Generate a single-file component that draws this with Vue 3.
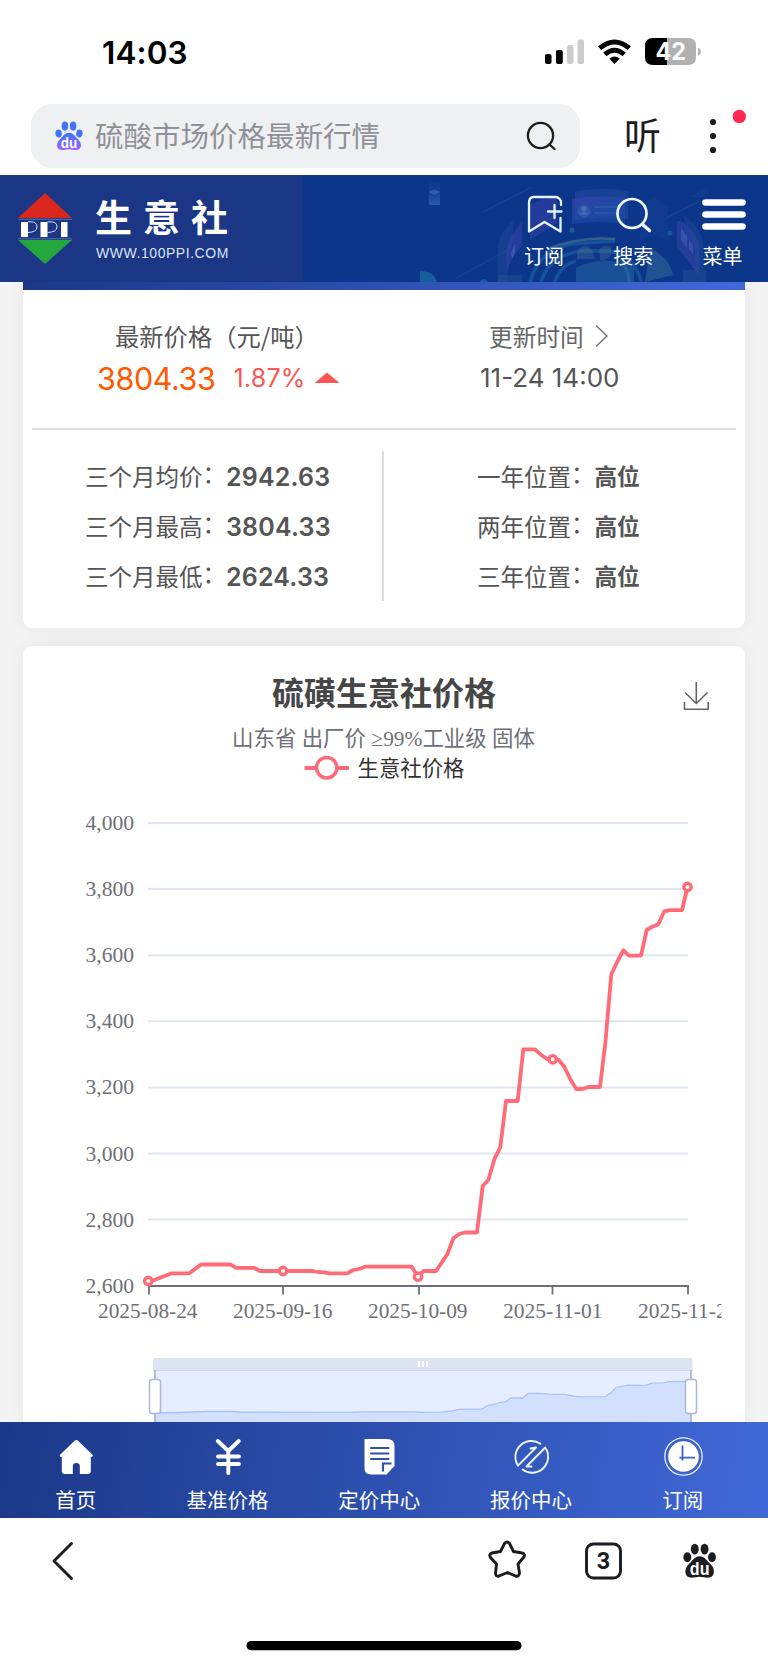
<script setup>
const averages = [
  { label: '三个月均价', value: '2942.63' },
  { label: '三个月最高', value: '3804.33' },
  { label: '三个月最低', value: '2624.33' },
]
const positions = [
  { label: '一年位置', value: '高位' },
  { label: '两年位置', value: '高位' },
  { label: '三年位置', value: '高位' },
]
const gridLines = [
  { label: '4,000', y: 823 },
  { label: '3,800', y: 889 },
  { label: '3,600', y: 955.2 },
  { label: '3,400', y: 1021.3 },
  { label: '3,200', y: 1087.4 },
  { label: '3,000', y: 1153.5 },
  { label: '2,800', y: 1219.6 },
  { label: '2,600', y: 1285.7 },
]
const dates = [
  { label: '2025-08-24', x: 98, tick: 149 },
  { label: '2025-09-16', x: 233, tick: 283 },
  { label: '2025-10-09', x: 368, tick: 419 },
  { label: '2025-11-01', x: 503, tick: 552.5 },
  { label: '2025-11-24', x: 638, tick: 688 },
]
const markers = [
  [148.3, 1281],
  [283, 1271],
  [418, 1276.7],
  [552.7, 1059.3],
  [687.5, 887],
]
const priceLine =
  '148.3,1281 153.5,1280.3 171.7,1273.3 189.3,1273.3 201,1264.5 230.7,1264.5 236,1267.8 254,1267.8 260,1271 312.7,1271 318,1272 324,1272.3 329.3,1273.3 347.3,1273.3 353.3,1270 359,1269 365,1266.7 411.7,1266.7 418,1276.7 423.5,1271 436,1271 447.3,1254.3 453.3,1238.3 459.3,1234 465,1232.5 477,1232.5 482.7,1186 488.3,1180 494.7,1158.3 500.3,1147.3 506,1101 517.7,1101 523.3,1049.3 535,1049.3 541.7,1055.3 547,1059 552.7,1059.3 558.3,1059.6 564.3,1066.7 570.3,1079.3 576.3,1089 582.7,1089 588.3,1087 600,1087 605.3,1043.3 611.3,974.3 617.3,961.7 623.3,950.3 629,955.7 641,955.7 646.7,930 652.3,926.7 658.3,924.3 664.3,911.3 670,910.2 682,910.2 687.5,887'
const sliderLine =
  '155,1413 180,1412.5 205,1411.5 232,1411.5 240,1412 350,1412.3 365,1411.8 415,1411.8 422,1412.4 441,1412.2 452,1411 459,1409.3 482,1409 487,1405.5 494,1404.5 500,1402.7 505,1402 511,1398 523,1398 528,1393.5 540,1393.4 548,1394.1 565,1394.3 575,1396.3 582,1396.9 605,1396.6 611,1392.6 616,1387.5 628,1385.2 646,1385.3 652,1383.2 663,1382.8 669,1381.6 691,1381.5'
</script>

<template>
  <main class="screen">
    <header class="status">
      <div class="clock">14:03</div>
      <svg class="status-icons" width="160" height="34" viewBox="543 35 160 34">
        <rect x="545" y="54" width="6.5" height="10" rx="2" />
        <rect x="556" y="50" width="6.8" height="14" rx="2" />
        <rect x="567" y="45" width="6.5" height="19" rx="2" fill="#ccc" />
        <rect x="577.5" y="39.5" width="6.5" height="24.5" rx="2" fill="#ccc" />
        <path d="M599.6 48.2Q614.5 35.6 629.4 48.2" fill="none" stroke="#000" stroke-width="4.8" />
        <path d="M604.8 54.4Q614.5 46.2 624.2 54.4" fill="none" stroke="#000" stroke-width="4.8" />
        <path d="M609.4 58.8Q614.5 54.3 619.6 58.8L614.5 64Z" />
        <path d="M653 38H667V65H653Q645 65 645 57V46Q645 38 653 38Z" />
        <path d="M667 38H688Q696 38 696 46V57Q696 65 688 65H667Z" fill="#b1b1b1" />
        <path d="M698 47.5Q701 49 701 51.7Q701 54.5 698 56Z" fill="#b1b1b1" />
        <text x="655.5" y="60.4" class="battery-text" textLength="30.5" lengthAdjust="spacingAndGlyphs">42</text>
      </svg>
    </header>

    <section class="browser-bar">
      <div class="search">
        <svg class="paw" width="28" height="30" viewBox="0 0 34 36">
          <defs>
            <linearGradient id="pawFill" x1="0" y1="0" x2="0" y2="1">
              <stop offset="0" stop-color="#3d74ff" />
              <stop offset="1" stop-color="#9b63fb" />
            </linearGradient>
          </defs>
          <g fill="#4372fc">
            <ellipse cx="4.4" cy="15" rx="3.9" ry="4.9" transform="rotate(-10 4.4 15)" />
            <ellipse cx="12" cy="6" rx="4" ry="5.5" />
            <ellipse cx="22" cy="6" rx="4" ry="5.5" />
            <ellipse cx="29.6" cy="15" rx="3.9" ry="4.9" transform="rotate(10 29.6 15)" />
          </g>
          <path d="M17 14C22 14 24 18 28 22C34 28 32 35 25.500 35C22 35 20 34 17 34C14 34 12 35 8.500 35C2 35 0 28 6 22C10 18 12 14 17 14Z" fill="url(#pawFill)" />
          <text x="7" y="32.500" class="du" fill="#fff" textLength="20" lengthAdjust="spacingAndGlyphs">du</text>
        </svg>
        <span class="query">硫酸市场价格最新行情</span>
        <svg class="magnifier" width="32" height="32" viewBox="0 0 32 32" fill="none" stroke="#1b1b22" stroke-width="2.300" stroke-linecap="round">
          <circle cx="14.500" cy="15.500" r="12.600" /><path d="M23.500 24.500L28.500 29" />
        </svg>
      </div>
      <span class="listen">听</span>
      <svg class="more" width="40" height="64" viewBox="706 104 40 64" fill="#1b1b22">
        <circle cx="713" cy="122" r="3.100" /><circle cx="713" cy="136" r="3.100" /><circle cx="713" cy="150" r="3.100" />
        <circle cx="739.300" cy="116.500" r="6.700" fill="#ff2850" />
      </svg>
    </section>

    <section class="site-head">
      <svg class="scenery" width="768" height="107" viewBox="0 175 768 107">
        <defs>
          <linearGradient id="beam" x1="0" y1="0" x2="0" y2="1"><stop offset="0" stop-color="#15469b" stop-opacity=".2" /><stop offset="1" stop-color="#3766b8" stop-opacity=".75" /></linearGradient>
          <linearGradient id="panel" x1="0" y1="0" x2="1" y2="1"><stop offset="0" stop-color="#3b43b2" stop-opacity=".7" /><stop offset="1" stop-color="#1553b1" stop-opacity=".4" /></linearGradient>
        </defs>
        <rect width="302.500" height="107" y="175" fill="#1a3685" />
        <rect x="429" y="182" width="11" height="23" fill="url(#beam)" />
        <path d="M429 192L434.500 189.500L440 192L434.500 195Z" fill="#426fc0" opacity=".6" />
        <g fill="none" stroke="#23509d" stroke-opacity=".6"><path d="M483 212L532 187M455 279L520 243M662 220L700 201" /></g>
        <path d="M575 191Q602 187 628 191V219Q602 216 575 219Z" fill="#28529f" opacity=".45" />
        <path d="M572 199Q599 194 625 198V224Q599 220 572 224Z" fill="url(#panel)" />
        <circle cx="584" cy="211" r="6.500" fill="#315bae" opacity=".8" /><circle cx="584" cy="208.500" r="2.500" fill="#4870b8" /><path d="M579.500 214.500Q584 209 588.500 214.500Z" fill="#4870b8" />
        <path d="M594 207H620M594 213H620" stroke="#335bab" stroke-width="2" opacity=".6" />
        <path d="M498 282V245Q501 230 513 221V240Q508 252 507 282Z" fill="#25509b" opacity=".4" />
        <path d="M506 253Q509 235 522 222V246Q511 257 507 272Z" fill="#3a43ad" opacity=".55" />
        <path d="M511 253L515 244V252L512 259Z" fill="#5871c6" opacity=".45" />
        <path d="M530 205Q546 196 557 198V223L530 240Z" fill="#3b42ae" opacity=".5" />
        <path d="M677 221Q684 218 699 242V275L677 247Z" fill="#3643aa" opacity=".55" />
        <path d="M683 215Q700 226 703 244V270H695V250Z" fill="#25509b" opacity=".4" />
        <path d="M681 228L687 236V248L681 240ZM689 240L693 245V254L689 249Z" fill="#587bc1" opacity=".35" />
        <g fill="none" stroke="#267aad" stroke-width="3.500" opacity=".42">
          <path d="M530 282Q538 251 571 244L615 241M541 282Q549 255 582 251H610Q636 258 641 282M555 282Q560 265 576 261M620 260Q628 267 629 282" />
        </g>
        <path d="M547 249Q580 236 615 239" fill="none" stroke="#668d93" stroke-width="2.500" opacity=".45" />
        <path d="M650 248Q670 258 673 275L645 282Z" fill="#437fa0" opacity=".4" />
        <path d="M577 252Q579 246 586 246L592 249L595 259H577ZM599 250Q604 244 611 247V255Q609 260 600 260Z" fill="#698398" opacity=".28" />
        <path d="M576 268Q603 253 634 268V282H576Z" fill="#337dae" opacity=".35" />
        <circle cx="572" cy="230" r="2.500" fill="#287aa5" opacity=".6" /><circle cx="670" cy="233" r="2.500" fill="#287aa5" opacity=".5" />
        <path d="M420 282V271Q434 271 437 282ZM480 282Q483 276 488 282Z" fill="#217eae" opacity=".55" />
        <path d="M498 282V275H522V282ZM683 282V270H706V282Z" fill="#244d91" opacity=".5" />
        <path d="M640 208L654 197L668 207V241L654 235L640 241ZM688 197L704 189L713 197Z" fill="#174293" opacity=".35" />
      </svg>
      <div class="brand">
        <svg width="56" height="76" viewBox="17 191 56 76">
          <path d="M45 193L72 218H18Z" fill="#da281e" />
          <path d="M18 240H72L45 264Z" fill="#22a83d" />
          <path d="M18 219.300H72M18 238.800H72" stroke="#7081b0" stroke-width=".8" />
          <path d="M21 222H28V237H21ZM40.500 222H47.500V237H40.500ZM61 222H67.500V237H61Z" fill="#fff" />
          <path d="M28 221.800H31Q37 222 37 227Q37 232 28 232.500M47.500 221.800H51Q57 222 57 227Q57 232 47.500 232.500" fill="none" stroke="#dce1f0" stroke-width="1" />
        </svg>
        <div class="brand-copy">
          <strong>生意社</strong>
          <span>WWW.100PPI.COM</span>
        </div>
      </div>
      <div class="site-actions">
        <div class="action">
          <svg width="44" height="42" viewBox="0 0 44 42" fill="none" stroke="#e8f1ff" stroke-width="2.300" stroke-linejoin="round" stroke-linecap="round">
            <path d="M38 12V8Q35.500 4 33 4H11Q6 4 6 10V38.500L21.500 29L37.500 38.500V25" /><path d="M25 18.500H38.500M31.500 12V25" />
          </svg>
          <span>订阅</span>
        </div>
        <div class="action">
          <svg width="44" height="42" viewBox="0 0 44 42" fill="none" stroke="#f1f7ff" stroke-width="2.700" stroke-linecap="round">
            <circle cx="20" cy="20.500" r="14.500" /><path d="M30.500 31.500L37.500 37.500" stroke-width="3.500" />
          </svg>
          <span>搜索</span>
        </div>
        <div class="action">
          <svg width="48" height="42" viewBox="0 0 48 42" stroke="#fff" stroke-width="6.600" stroke-linecap="round">
            <path d="M6.500 9.500H43.500M6.500 21.500H43.500M6.500 33.500H43.500" />
          </svg>
          <span>菜单</span>
        </div>
      </div>
    </section>

    <section class="content">
      <article class="card summary">
        <div class="strip"></div>
        <div class="latest">
          <div class="latest-cell">
            <span class="caption">最新价格（元/吨）</span>
            <div class="price-row">
              <span class="price">3804.33</span>
              <span class="change">1.87%</span>
              <svg width="26" height="12" viewBox="0 0 26 12"><path d="M13 .5L25.500 11H.5Z" fill="#fb5555" /></svg>
            </div>
          </div>
          <div class="latest-cell update">
            <span class="caption muted">更新时间<svg width="14" height="24" viewBox="0 0 14 24" fill="none" stroke="#777" stroke-width="1.500"><path d="M1 1.500L12 12L1 22.500" /></svg></span>
            <span class="stamp">11-24 14:00</span>
          </div>
        </div>
        <div class="figures">
          <div class="column left">
            <div v-for="row in averages" :key="row.label" class="figure">
              <span>{{ row.label }}</span><span class="colon">：</span><strong class="number">{{ row.value }}</strong>
            </div>
          </div>
          <div class="column right">
            <div v-for="row in positions" :key="row.label" class="figure">
              <span>{{ row.label }}</span><span class="colon">：</span><strong>{{ row.value }}</strong>
            </div>
          </div>
        </div>
      </article>

      <article class="card chart-card">
        <svg class="chart" width="722" height="776" viewBox="23 646 722 776">
          <defs><clipPath id="canvasEdge"><rect x="24" y="646" width="697.500" height="776" /></clipPath></defs>
          <text x="272" y="705" class="chart-title">硫磺生意社价格</text>
          <text x="232" y="746" class="chart-subtitle" textLength="303" lengthAdjust="spacingAndGlyphs">山东省 出厂价 ≥99%工业级 固体</text>
          <g fill="none" stroke="#666" stroke-width="1.600">
            <path d="M696.300 682V703M685 692.500L696.300 703.500L707.500 692.500" /><path d="M684.500 702V709.300H708.200V702" />
          </g>
          <path d="M304.500 768H349" stroke="#ff6b76" stroke-width="4" />
          <circle cx="326.700" cy="767.800" r="10.200" fill="#fff" stroke="#ff6b76" stroke-width="3.500" />
          <text x="357.500" y="775.800" class="legend" textLength="107" lengthAdjust="spacingAndGlyphs">生意社价格</text>

          <g v-for="(line, i) in gridLines" :key="line.label">
            <path v-if="i < 7" :d="`M148 ${line.y}H688`" stroke="#e0e6f1" stroke-width="2" />
            <text x="85.500" :y="line.y + 7" class="axis-text" textLength="48.500" lengthAdjust="spacingAndGlyphs">{{ line.label }}</text>
          </g>
          <path d="M148 1286H689" stroke="#6e7079" stroke-width="1.800" />
          <g clip-path="url(#canvasEdge)">
            <g v-for="date in dates" :key="date.label">
              <path :d="`M${date.tick} 1286V1294.500`" stroke="#6e7079" stroke-width="1.800" />
              <text :x="date.x" y="1318.300" class="axis-text" textLength="99.500" lengthAdjust="spacingAndGlyphs">{{ date.label }}</text>
            </g>
          </g>
          <polyline :points="priceLine" fill="none" stroke="#ff6b76" stroke-width="3.800" stroke-linejoin="round" />
          <circle v-for="point in markers" :key="point[0]" :cx="point[0]" :cy="point[1]" r="3.700" fill="#fff" stroke="#ff6b76" stroke-width="3.400" />

          <path d="M153 1372V1360.500Q153 1358 155.500 1358H690Q692.500 1358 692.500 1360.500V1372Z" fill="#dce4f1" />
          <rect x="154" y="1371" width="538" height="51" fill="#e6edfe" />
          <polygon :points="`155,1422 ${sliderLine} 691,1422`" fill="#d3e0fd" />
          <polyline :points="sliderLine" fill="none" stroke="#a9c3fa" stroke-width="1.300" />
          <path d="M154 1370.500H692" stroke="#d0dae9" stroke-width="1" />
          <path d="M419 1361V1367M423 1361V1367M427 1361V1367" stroke="#fff" stroke-width="2" />
          <path d="M155 1370V1422M691 1370V1422" stroke="#acb8d4" stroke-width="1.800" />
          <rect x="149.500" y="1379.500" width="11" height="34" rx="2.500" fill="#fff" stroke="#acb8d4" stroke-width="1.500" />
          <rect x="685.500" y="1379.500" width="11" height="34" rx="2.500" fill="#fff" stroke="#acb8d4" stroke-width="1.500" />
        </svg>
      </article>
    </section>

    <nav class="tabs">
      <div class="tab">
        <svg width="44" height="40" viewBox="0 0 44 40" fill="#fff"><path d="M20.300 4Q22.300 2 24.300 4L38.800 18Q39.300 20 36.800 20V34Q36.800 37 33.800 37H25.800V29Q25.800 26 22.300 26Q18.800 26 18.800 29V37H10.800Q7.800 37 7.800 34V20Q5.300 20 5.800 18Z" /></svg>
        <span>首页</span>
      </div>
      <div class="tab">
        <svg width="44" height="40" viewBox="0 0 44 40" fill="none" stroke="#fff" stroke-width="3.900" stroke-linecap="round"><path d="M11.800 4L22.300 14L32.800 4M22.300 14V36M12 19.500H33M12 27H33" /></svg>
        <span>基准价格</span>
      </div>
      <div class="tab">
        <svg width="44" height="40" viewBox="0 0 44 40"><path d="M7.500 2H30Q37.500 2 37.500 9V29L29.500 37.500H14Q7.500 37.500 7.500 31Z" fill="#fff" /><path d="M14 11H31.500M14 16.500H31.500M14 22H31.500" stroke="#2d51ad" stroke-width="2" stroke-linecap="round" /><path d="M26 34.500V26.500H34.500" fill="none" stroke="#2d51ad" stroke-width="2.200" /></svg>
        <span>定价中心</span>
      </div>
      <div class="tab">
        <svg width="44" height="40" viewBox="0 0 44 40" fill="none" stroke="#edf3ff" stroke-width="1.900" stroke-linejoin="round" stroke-linecap="round"><path d="M31.500 6.800A16 16 0 0 0 9 28.700L27 10.500L21.500 11.500M13.500 32.500A16 16 0 0 0 36.200 10.500L17.500 29.500H22.500" /></svg>
        <span>报价中心</span>
      </div>
      <div class="tab">
        <svg width="44" height="40" viewBox="0 0 44 40"><circle cx="22.500" cy="19.500" r="18.700" fill="none" stroke="#e6edff" stroke-width="1.300" /><circle cx="22.500" cy="19.500" r="15.300" fill="#fff" /><path d="M21.500 8.500V23.500M18.500 20.600H34" fill="none" stroke="#3c63cb" stroke-width="1.800" /></svg>
        <span>订阅</span>
      </div>
    </nav>

    <footer class="toolbar">
      <svg width="768" height="147" viewBox="0 1518 768 147">
        <g fill="none" stroke="#1b1b22" stroke-width="2.900" stroke-linejoin="round" stroke-linecap="round">
          <path d="M71.500 1543.500L54 1561L71.500 1578.500" />
          <path d="M504.500 1543.500Q507 1540.500 509.500 1543.500L513.500 1551.500L522 1553Q526 1554 523.500 1557.500L518 1564L519.500 1573Q519 1577 515.500 1576L507.500 1572.500L499 1576Q495.500 1577 495.500 1573L496.500 1564L490.500 1557.500Q488.500 1554 492 1553L500.500 1551.500Z" />
          <rect x="586.500" y="1544" width="34" height="34" rx="7" />
        </g>
        <text x="603.500" y="1569.200" class="tab-count" text-anchor="middle">3</text>
        <g transform="translate(683 1543.500) scale(.98)" fill="#1d1d20">
          <ellipse cx="4.400" cy="14" rx="4" ry="5" /><ellipse cx="12" cy="5.800" rx="4" ry="5.500" /><ellipse cx="22" cy="5.800" rx="4" ry="5.500" /><ellipse cx="29.600" cy="14" rx="4" ry="5" />
          <path d="M17 13C22 13 24 17 28 21C34 27 32 35 25.500 35C22 35 20 34 17 34C14 34 12 35 8.500 35C2 35 0 27 6 21C10 17 12 13 17 13Z" />
          <text x="7" y="32" class="du" fill="#fff" textLength="20" lengthAdjust="spacingAndGlyphs">du</text>
        </g>
        <rect x="246.500" y="1641" width="275" height="9.300" rx="4.600" fill="#000" />
      </svg>
    </footer>
  </main>
</template>

<style>
body { background: #fff; }
</style>

<style scoped>
* { box-sizing: border-box; }
.screen { width: 768px; height: 1665px; overflow: hidden; background: #fff; font-family: Inter, "Noto Sans CJK SC", sans-serif; color: #444; }
svg { display: block; flex: none; }
.status { height: 104px; display: flex; justify-content: space-between; padding: 35px 65px 0 102px; }
.clock { font-size: 31.5px; line-height: 36px; font-weight: 600; letter-spacing: .1px; color: #000; }
.battery-text { font: 700 24px Inter, sans-serif; fill: #fff; }
.browser-bar { height: 71px; display: flex; align-items: flex-start; padding-left: 31px; }
.search { width: 549px; height: 64px; border-radius: 21px; background: #eff0f2; display: flex; align-items: center; padding: 0 22px 0 24px; }
.query { margin-left: 12px; flex: 1; font-family: "Noto Sans CJK SC", sans-serif; font-size: 28.5px; line-height: 62px; height: 64px; white-space: nowrap; color: #8f9099; font-weight: 400; }
.du { font: 700 18px "Liberation Sans", sans-serif; }
.listen { margin-left: 44px; width: 38px; font: 400 37px/61px "Noto Sans CJK SC", sans-serif; color: #1b1b22; }
.more { margin-left: 44px; }
.site-head { height: 107px; position: relative; background: #0b368a; color: #fff; display: flex; justify-content: space-between; }
.scenery { position: absolute; inset: 0; }
.brand { position: relative; display: flex; padding: 16px 0 0 17px; }
.brand-copy { margin-left: 22px; display: flex; flex-direction: column; }
.brand-copy strong { font: 700 37px/50px "Noto Sans CJK SC", sans-serif; letter-spacing: 11px; white-space: nowrap; }
.brand-copy span { margin: 3px 0 0 1px; font: 400 14px/18px "Liberation Sans", sans-serif; letter-spacing: .55px; color: #dbe3f3; }
.site-actions { position: relative; display: flex; padding: 18px 18px 0 0; }
.action { width: 89.3px; display: flex; flex-direction: column; align-items: center; }
.action:last-child { width: 54px; margin-left: 17.500px; }
.action span { margin-top: 4px; margin-left: -1px; font: 400 20px/34px "Noto Sans CJK SC", sans-serif; }
.content { height: 1140px; padding: 0 23px; background: #f3f3f4; overflow: hidden; }
.card { background: #fff; box-shadow: 0 0 18px rgba(0, 0, 0, .05); }
.summary { height: 346px; border-radius: 0 0 9px 9px; padding: 0 9px; }
.strip { height: 8px; margin: 0 -9px; background: linear-gradient(90deg, #1b3888, #4068d8); }
.latest { height: 140px; display: flex; border-bottom: 2px solid #dedede; }
.latest-cell { width: 50%; display: flex; flex-direction: column; padding: 28px 0 0 83px; }
.latest-cell.update { padding-left: 105px; }
.caption { display: flex; align-items: center; height: 36px; font: 400 24.3px/36px "Noto Sans CJK SC", sans-serif; color: #555; white-space: nowrap; }
.muted { font-size: 23.700px; color: #666; }
.muted svg { margin-left: 11px; }
.price-row { display: flex; align-items: center; height: 48px; margin-left: -18px; }
.price { width: 136.500px; font-size: 30.500px; color: #ff5a00; letter-spacing: -.4px; }
.change { width: 80px; font-size: 25px; letter-spacing: .2px; color: #fb5555; }
.stamp { margin-left: -9px; font-size: 26px; line-height: 47px; color: #555; }
.figures { height: 198px; display: flex; padding-top: 21px; }
.column { width: 353px; height: 150px; }
.left { border-right: 2px solid #ddd; padding-left: 53px; }
.right { padding-left: 93px; }
.figure { height: 50px; display: flex; align-items: center; font: 400 23.500px/50px "Noto Sans CJK SC", sans-serif; color: #555; white-space: nowrap; }
.colon { padding-bottom: 6px; }
.figure strong { font-weight: 700; font-size: 22.700px; }
.figure .number { font-family: Inter, sans-serif; font-size: 25px; font-weight: 600; letter-spacing: .2px; padding-top: 2px; }
.chart-card { height: 776px; margin-top: 18px; border-radius: 9px 9px 0 0; }
.chart-title { font: 700 32px "Noto Sans CJK SC", sans-serif; fill: #464646; }
.chart-subtitle { font: 400 22px "Liberation Serif", "Noto Sans CJK SC", serif; fill: #6e7079; }
.legend { font: 400 22px "Noto Sans CJK SC", sans-serif; fill: #333; }
.axis-text { font: 400 21.500px "Liberation Serif", serif; fill: #6e7079; }
.tabs { position: relative; height: 96px; padding-right: 9.5px; display: grid; grid-template-columns: repeat(5, 1fr); background: linear-gradient(100deg, #1b3888, #4068d8); color: #fff; }
.tab { display: flex; flex-direction: column; align-items: center; padding-top: 15px; }
.tab span { margin-top: 1px; font: 400 20.500px/42px "Noto Sans CJK SC", sans-serif; }
.toolbar { height: 147px; background: #fff; }
.tab-count { font: 700 23.5px Roboto, sans-serif; fill: #1b1b22; }
</style>
